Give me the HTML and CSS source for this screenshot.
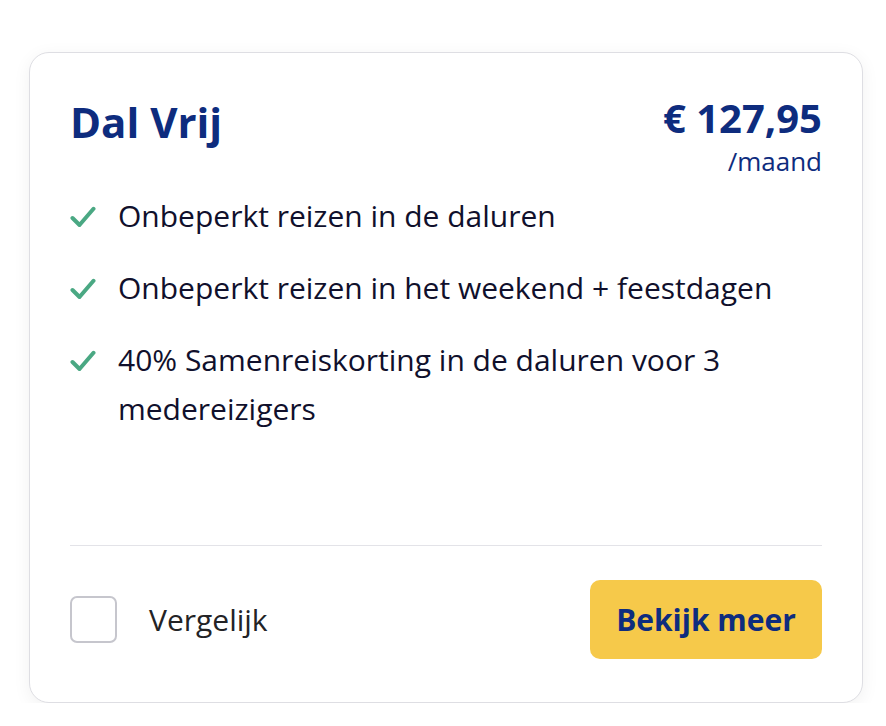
FILE: index.html
```html
<!DOCTYPE html>
<html lang="nl">
<head>
<meta charset="utf-8">
<title>Dal Vrij</title>
<link rel="stylesheet" href="styles.css">
</head>
<body>
<div class="page">
  <article class="card">
    <header class="card-head">
      <h2 class="title">Dal Vrij</h2>
      <div class="price">
        <div class="amount">€ 127,95</div>
        <div class="per">/maand</div>
      </div>
    </header>
    <ul class="features">
      <li class="feature">
        <svg class="check" width="26" height="22" viewBox="0 0 26 22"><path d="M2.5 12 L9.5 19 L23.5 2.8" fill="none" stroke="currentColor" stroke-width="4" stroke-linecap="round" stroke-linejoin="round"/></svg>
        <span>Onbeperkt reizen in de daluren</span>
      </li>
      <li class="feature">
        <svg class="check" width="26" height="22" viewBox="0 0 26 22"><path d="M2.5 12 L9.5 19 L23.5 2.8" fill="none" stroke="currentColor" stroke-width="4" stroke-linecap="round" stroke-linejoin="round"/></svg>
        <span>Onbeperkt reizen in het weekend + feestdagen</span>
      </li>
      <li class="feature">
        <svg class="check" width="26" height="22" viewBox="0 0 26 22"><path d="M2.5 12 L9.5 19 L23.5 2.8" fill="none" stroke="currentColor" stroke-width="4" stroke-linecap="round" stroke-linejoin="round"/></svg>
        <span>40% Samenreiskorting in de daluren voor 3 medereizigers</span>
      </li>
    </ul>
    <footer class="card-foot">
      <label class="compare">
        <span class="box"></span>
        <span class="compare-text">Vergelijk</span>
      </label>
      <button class="more">Bekijk meer</button>
    </footer>
  </article>
</div>
</body>
</html>
```

FILE: styles.css
```css
* { box-sizing: border-box; }

html, body {
  margin: 0;
  background: #ffffff;
}

body {
  font-family: "Open Sans", "Noto Sans", sans-serif;
}

.page {
  padding: 52px 0 0 29px;
}

.card {
  width: 834px;
  height: 651px;
  border: 1px solid #dedee3;
  border-radius: 20px;
  background: #fff;
  box-shadow: 0 4px 18px rgba(0, 0, 0, 0.06);
  padding: 43px 40px 43px 40px;
  display: flex;
  flex-direction: column;
}

.card-head {
  display: flex;
  justify-content: space-between;
  align-items: flex-start;
}

.title {
  margin: 0;
  font-size: 42px;
  line-height: 52px;
  font-weight: 700;
  color: #0e2c7e;
}

.price {
  text-align: right;
  color: #0e2c7e;
  margin-top: -2px;
}

.amount {
  font-size: 40px;
  line-height: 48px;
  font-weight: 700;
}

.per {
  font-size: 26px;
  line-height: 38px;
}

.features {
  list-style: none;
  margin: 11px 0 0 0;
  padding: 0;
  display: flex;
  flex-direction: column;
  gap: 23px;
  flex: 1;
}

.feature {
  display: flex;
  align-items: flex-start;
  gap: 22px;
  font-size: 30px;
  line-height: 49px;
  color: #10102c;
}

.check {
  flex: none;
  color: #4aa883;
  margin-top: 15px;
}

.card-foot {
  border-top: 1px solid #e3e3e8;
  padding-top: 34px;
  display: flex;
  justify-content: space-between;
  align-items: center;
}

.compare {
  display: flex;
  align-items: center;
  gap: 32px;
}

.box {
  width: 47px;
  height: 47px;
  border: 2px solid #c6c6cd;
  border-radius: 7px;
  background: #fff;
}

.compare-text {
  font-size: 30px;
  color: #232326;
}

.more {
  font-family: inherit;
  font-size: 30px;
  font-weight: 700;
  color: #0e2c7e;
  background: #f6c94a;
  border: none;
  border-radius: 10px;
  width: 232px;
  height: 79px;
  padding: 0;
}
```
